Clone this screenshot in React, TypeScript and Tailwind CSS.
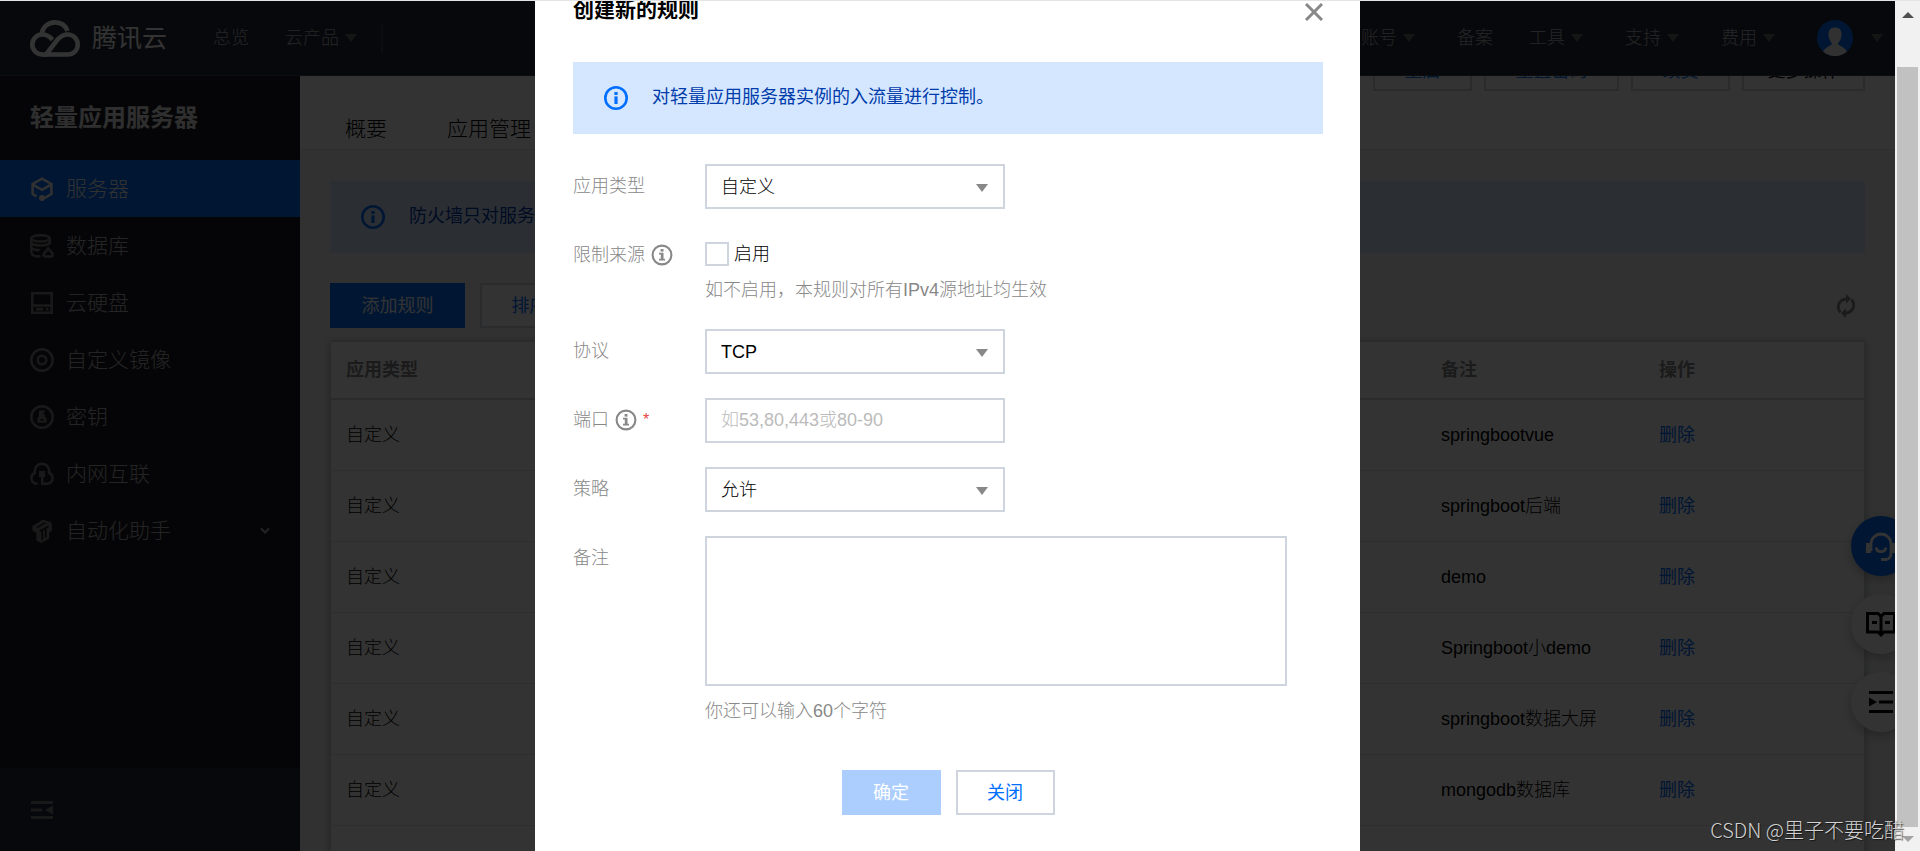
import type { ReactNode } from "react";

function Caret({ className }: { className: string }) {
  return (
    <svg viewBox="0 0 12 8" aria-hidden="true" className={`h-2 w-3 shrink-0 fill-current ${className}`}>
      <path d="M0 0h12L6 8z" />
    </svg>
  );
}

function AlertIcon() {
  return (
    <svg viewBox="0 0 24 24" aria-hidden="true" className="size-6 shrink-0 text-[#006eff]">
      <circle cx="12" cy="12" r="10.7" fill="none" stroke="currentColor" strokeWidth="2.6" />
      <rect x="10.4" y="6" width="3.2" height="3" fill="currentColor" />
      <rect x="10.4" y="10.4" width="3.2" height="7.6" fill="currentColor" />
    </svg>
  );
}

function HelpIcon() {
  return (
    <svg viewBox="0 0 22 22" aria-hidden="true" className="size-[22px] shrink-0 text-[#888]">
      <circle cx="11" cy="11" r="9.4" fill="none" stroke="currentColor" strokeWidth="2.1" />
      <rect x="9.6" y="5" width="2.9" height="2.6" fill="currentColor" />
      <path d="M8 8.8h4.5v6H14v1.8H8v-1.8h1.8v-4.2H8z" fill="currentColor" />
    </svg>
  );
}

function Alert({ children }: { children: ReactNode }) {
  return (
    <div className="flex h-[72px] items-center gap-6 bg-[#d5e7ff] pl-[31px] text-lg font-normal text-[#003cab]">
      <AlertIcon />
      <p className="pb-0.5 whitespace-nowrap">{children}</p>
    </div>
  );
}

const line = { fill: "none", stroke: "currentColor", strokeWidth: 2.5 } as const;

const menu: { label: string; icon: ReactNode; expandable?: boolean }[] = [
  {
    label: "服务器",
    icon: (
      <>
        <path {...line} d="M6.5 19.4 2.6 17V6.9L12 1.6l9.4 5.3V17l-6.6 3.8" />
        <path {...line} d="m2.8 7.6 9.2 5.2 9.2-5.2" />
        <circle cx="12" cy="21" r="3" fill="currentColor" />
      </>
    ),
  },
  {
    label: "数据库",
    icon: (
      <>
        <ellipse {...line} cx="10.5" cy="4.4" rx="9.2" ry="3.2" />
        <path {...line} d="M1.3 8.2c0 4.4 18.4 4.4 18.4 0M1.3 13.4c.5 1.6 3.6 2.7 8.2 2.6M1.3 18.6c.4 2.6 4.2 4 9 3.9M1.3 4.400v14.200M19.700 4.400v6" />
        <path {...line} d="M18.2 14.4c1.6 2.6 4.4 4.2 4.4 6 0 1.6-.8 2.2-2 2.2h-5c-1.600 0-2.200-.9-2-2.200.3-1.600 3.200-3.400 4.600-6z" />
      </>
    ),
  },
  {
    label: "云硬盘",
    icon: (
      <>
        <path {...line} d="M2.300 2.300h19.400v19.400H2.300zM2.300 14.400h19.400" />
        <path fill="currentColor" d="M6 16.800h7v2.800H6zM15.800 16.800h2.800v2.800h-2.800z" />
      </>
    ),
  },
  {
    label: "自定义镜像",
    icon: (
      <>
        <circle {...line} cx="12" cy="12" r="10.700" />
        <circle {...line} cx="12" cy="12" r="4.300" />
      </>
    ),
  },
  {
    label: "密钥",
    icon: (
      <>
        <circle {...line} cx="12" cy="12" r="10.700" />
        <path fill="currentColor" fillRule="evenodd" d="M9 5.600h5.800v2H13V9h1.800v2.400c1.300.8 1.900 1.800 1.900 3v3.400H7.300v-3.400c0-1.200.6-2.200 1.700-3zM10.500 14h3v1.800h-3z" />
      </>
    ),
  },
  {
    label: "内网互联",
    icon: (
      <>
        <path {...line} d="M7.600 21.700H7A5.600 5.600 0 0 1 4.800 11C4.200 5.600 7.400 1.700 12 1.700S19.800 5.600 19.200 11A5.600 5.600 0 0 1 17 21.700h-4.800V13" />
        <path fill="currentColor" d="M9 9h6v6H9z" />
      </>
    ),
  },
  {
    label: "自动化助手",
    expandable: true,
    icon: (
      <path fill="currentColor" fillRule="evenodd" d="m2.400 7 10.800-6.400 8.600 3.200v8l-2.600 1.400v6.400L11.400 24l-5-2.600v-7.600l-4-2.200zM6.200 8.300l8.400-5 1.600.7-8.500 5zM9.600 11.300l8.900-4.800v2l-2 1v8.600l-1.800 1v-8.600l-1.600.9v9.200l-1.800 1v-9.200l-1.700.9z" />
    ),
  },
];

const accountNav = [
  { label: "集团账号", drop: true },
  { label: "备案", drop: false },
  { label: "工具", drop: true },
  { label: "支持", drop: true },
  { label: "费用", drop: true },
];

const remarks = ["springbootvue", "springboot后端", "demo", "Springboot小demo", "springboot数据大屏", "mongodb数据库", ""];

function Header() {
  return (
    <header className="flex h-[75px] shrink-0 items-center justify-between border-b border-[#3b414c] bg-[#262b38] pr-3 text-lg text-[#b4b6ba]">
      <div className="flex items-center">
        <a href="#home" className="flex items-center gap-3 pl-[30px] text-[25px] text-white">
          <svg viewBox="0 0 50 37" aria-hidden="true" className="h-[37px] w-[50px] fill-none stroke-current stroke-[4.6]">
            <path d="M17.500 34.500H13C6.500 34.500 2.300 30 2.300 24.500c0-5.800 4.500-10 10-10 4.500 0 7.200 1.800 10.200 5.200" />
            <path d="M11.500 14.500C12.500 7 18 2.400 25 2.400c6 0 10.600 3.300 12.500 8.600" />
            <path d="M16 34.500h21.500c6 0 10.200-4.400 10.200-9.800 0-5.700-4.400-10.200-10.200-10.200-4.200 0-6.700 1.800-9.500 4.600z" />
          </svg>
          <span>腾讯云</span>
        </a>
        <nav className="flex items-center pl-[46px] font-light">
          <a href="#overview">总览</a>
          <a href="#products" className="flex items-center gap-1.5 pl-9">
            云产品
            <Caret className="text-[#6b6b6b]" />
          </a>
          <span className="ml-6 h-[30px] w-0.5 bg-[#3b414c]" />
        </nav>
      </div>
      <nav className="flex items-center gap-9 font-light">
        {accountNav.map((n) => (
          <a key={n.label} href={`#${n.label}`} className={n.drop ? "flex items-center gap-1.5 pr-1.5" : ""}>
            {n.label}
            {n.drop && <Caret className="text-[#6b6b6b]" />}
          </a>
        ))}
        <button type="button" aria-label="用户" className="flex items-center gap-[18px]">
          <svg viewBox="0 0 36 36" aria-hidden="true" className="size-9">
            <circle cx="18" cy="18" r="18" fill="#006eff" />
            <path d="M6 31.500c2-4 7-5.500 9-7.500 0-1.500-3.500-3.500-3.500-10 0-4.500 2.800-6.500 6.500-6.500s6.500 2 6.500 6.500c0 6.500-3.500 8.500-3.500 10 2 2 7 3.500 9 7.500a18 18 0 0 1-24 0z" fill="#f4f4f4" />
          </svg>
          <Caret className="text-[#6b6b6b]" />
        </button>
      </nav>
    </header>
  );
}

function Sidebar() {
  return (
    <aside className="flex w-[300px] shrink-0 flex-col bg-[#1a1d23]">
      <h1 className="flex h-[84px] items-center pl-[30px] text-2xl font-bold text-[#e8e8e8]">轻量应用服务器</h1>
      <nav className="flex-1">
        {menu.map((m, i) => (
          <a
            key={m.label}
            href={`#${m.label}`}
            className={`flex h-[57px] items-center gap-3 px-[30px] text-[21px] font-light ${i === 0 ? "bg-[#006eff] text-[#f4f4f4]" : "text-[#b4b4b4]"}`}
          >
            <svg viewBox="0 0 24 24" aria-hidden="true" className={`size-6 shrink-0 ${i === 0 ? "text-[#f4f4f4]" : "text-[#7c7c7c]"}`}>
              {m.icon}
            </svg>
            <span className="flex-1">{m.label}</span>
            {m.expandable && (
              <svg viewBox="0 0 10 8" aria-hidden="true" className="h-2 w-[10px] text-[#aaa]">
                <path {...line} d="m1 1.500 4 4 4-4" strokeWidth="2.200" />
              </svg>
            )}
          </a>
        ))}
      </nav>
      <div className="flex h-[83px] items-center bg-[#262b38] pl-[30px]">
        <button type="button" aria-label="收起菜单">
          <svg viewBox="0 0 24 24" aria-hidden="true" className="size-6 fill-[#7c7c7c]">
            <path d="M1 3h22v3H1zM1 10.500h11v3H1zM1 18h22v3H1zM23 7.500v9L15 12z" />
          </svg>
        </button>
      </div>
    </aside>
  );
}

const toolbar = [
  { label: "重启", cls: "w-[99px] text-[#006eff]" },
  { label: "重置密码", cls: "w-[135px] text-[#006eff]" },
  { label: "续费", cls: "w-[99px] text-[#006eff]" },
  { label: "更多操作", cls: "w-[123px] text-black" },
];

function Content() {
  return (
    <main className="flex min-w-0 flex-1 flex-col overflow-hidden bg-[#f4f5f7] font-light">
      <div className="border-b border-[#eaeaea] bg-white">
        <div className="flex h-[15px] items-end justify-end gap-3 overflow-hidden pr-[30px]">
          {toolbar.map((t) => (
            <button key={t.label} type="button" className={`h-[45px] shrink-0 border-2 border-[#d5d8de] pt-1 text-lg font-normal ${t.cls}`}>
              {t.label}
            </button>
          ))}
        </div>
        <div className="flex h-[58px] items-center gap-[60px] pt-[18px] pl-[45px] text-[21px] text-black">
          <a href="#summary">概要</a>
          <a href="#apps">应用管理</a>
        </div>
      </div>
      <div className="flex flex-col px-[30px] pt-[31px]">
        <Alert>防火墙只对服务器入流量进行控制。</Alert>
        <div className="flex items-center justify-between pt-[30px] pb-3 text-lg font-normal">
          <div className="flex gap-[15px]">
            <button type="button" className="h-[45px] w-[135px] bg-[#006eff] text-white">
              添加规则
            </button>
            <button type="button" className="h-[45px] w-[99px] border-2 border-[#cfd5de] bg-white text-[#006eff]">
              排序
            </button>
          </div>
          <button type="button" aria-label="刷新" className="mr-[7px]">
            <svg viewBox="0 0 24 24" aria-hidden="true" className="size-6">
              <g fill="none" stroke="#888" strokeWidth="2.800">
                <path d="M6.500 18.500C2.500 14 4 5.500 12.500 5" />
                <path d="M17.500 5.500C21.500 10 20 18.500 11.500 19" />
              </g>
              <path d="M12 0l5 4.800-5 5zM12 24l-5-4.800 5-5z" fill="#888" />
            </svg>
          </button>
        </div>
        <div className="border-x border-t-2 border-[#cfd5de] bg-white shadow-[0_2px_8px_rgba(0,0,0,0.3)]">
          <table className="w-full table-fixed border-separate border-spacing-0 text-left text-lg text-black">
            <thead>
              <tr className="h-[58px] text-[#888]">
                <th className="border-b-2 border-[#cfd5de] pl-[15px] font-bold">应用类型</th>
                <th className="w-[218px] border-b-2 border-[#cfd5de] pl-[15px] font-bold">备注</th>
                <th className="w-[220px] border-b-2 border-[#cfd5de] pl-[15px] font-bold">操作</th>
              </tr>
            </thead>
            <tbody>
              {remarks.map((r, i) => (
                <tr key={i} className="h-[71px]">
                  <td className="border-b border-[#e4e7ec] pl-[15px]">自定义</td>
                  <td className="border-b border-[#e4e7ec] pl-[15px] whitespace-nowrap">{r}</td>
                  <td className="border-b border-[#e4e7ec] pl-[15px]">
                    <a href="#delete" className="font-normal text-[#006eff]">
                      删除
                    </a>
                  </td>
                </tr>
              ))}
            </tbody>
          </table>
        </div>
      </div>
    </main>
  );
}

function FloatingTools() {
  return (
    <div className="absolute top-[515px] -right-4 flex flex-col gap-[18px]">
      <button type="button" aria-label="客服" className="grid size-[60px] place-items-center rounded-full bg-[#006eff] text-white shadow-[0_4px_12px_rgba(0,0,0,0.25)]">
        <svg viewBox="0 0 30 30" aria-hidden="true" className="size-[30px]">
          <path {...line} strokeWidth="2.800" d="M5 20V13a10 10 0 0 1 20 0v9c0 4-2 6.500-5 6.500h-5" />
          <path {...line} strokeWidth="2.800" d="M10 16.500c1 5.500 9 5.500 10 0" />
          <path fill="currentColor" d="M0 12h5v10H0zM25 12h5v10h-5z" />
        </svg>
      </button>
      <button type="button" aria-label="文档" className="grid size-[60px] place-items-center rounded-full bg-white text-black shadow-[0_4px_12px_rgba(0,0,0,0.25)]">
        <svg viewBox="0 0 30 30" aria-hidden="true" className="size-[30px]">
          <path {...line} strokeWidth="3" d="M15 7.500 12 4.500H1.500v18.500H12l3 3 3-3h10.500V4.500H18zV26" />
          <path fill="currentColor" d="M6 12h5v3H6zM19 12h5v3h-5z" />
        </svg>
      </button>
      <button type="button" aria-label="目录" className="grid size-[60px] place-items-center rounded-full bg-white text-black shadow-[0_4px_12px_rgba(0,0,0,0.25)]">
        <svg viewBox="0 0 24 24" aria-hidden="true" className="size-6 fill-current">
          <path d="M0 1h24v3H0zM10 10.500h14v3H10zM0 20h24v3H0zM0 7.500 8 12l-8 4.500z" />
        </svg>
      </button>
    </div>
  );
}

function Row({ label, htmlFor, extra, children }: { label: string; htmlFor: string; extra?: ReactNode; children: ReactNode }) {
  return (
    <div className="flex items-start">
      <div className="flex h-11 w-[132px] shrink-0 items-center gap-1.5 text-[#888]">
        <label htmlFor={htmlFor}>{label}</label>
        {extra}
      </div>
      <div className="flex min-w-0 flex-1 flex-col items-start">{children}</div>
    </div>
  );
}

function Select({ id, options }: { id: string; options: string[] }) {
  return (
    <div className="relative w-[300px]">
      <select id={id} className="block h-[45px] w-full appearance-none border-2 border-[#cfd5de] bg-white pr-9 pl-[14px] text-black outline-none">
        {options.map((o) => (
          <option key={o}>{o}</option>
        ))}
      </select>
      <Caret className="pointer-events-none absolute top-5 right-[17px] text-[#888]" />
    </div>
  );
}

function RuleDialog() {
  return (
    <div className="absolute inset-0 flex justify-center bg-black/80">
      <section role="dialog" aria-labelledby="dialog-title" className="flex w-[825px] max-w-full flex-col bg-white pr-[37px] pl-[38px] text-lg font-light">
        <div className="flex h-[61px] items-start justify-between">
          <h2 id="dialog-title" className="text-[21px] leading-[17px] font-bold text-black">
            创建新的规则
          </h2>
          <button type="button" aria-label="关闭对话框" className="pt-0.5">
            <svg viewBox="0 0 18 18" aria-hidden="true" className="size-[18px] fill-none stroke-[#888] stroke-[3]">
              <path d="m1 1 16 16M17 1 1 17" />
            </svg>
          </button>
        </div>
        <Alert>对轻量应用服务器实例的入流量进行控制。</Alert>
        <form className="flex flex-col gap-6 pt-[30px]" onSubmit={(e) => e.preventDefault()}>
          <Row label="应用类型" htmlFor="app-type">
            <Select id="app-type" options={["自定义"]} />
          </Row>
          <Row label="限制来源" htmlFor="limit-source" extra={<HelpIcon />}>
            <div className="flex h-[42px] items-center gap-[5px]">
              <input id="limit-source" type="checkbox" className="size-6 appearance-none border-2 border-[#cfd5de] bg-white" />
              <label htmlFor="limit-source" className="text-black">
                启用
              </label>
            </div>
            <p className="leading-[30px] text-[#888]">如不启用，本规则对所有IPv4源地址均生效</p>
          </Row>
          <Row label="协议" htmlFor="protocol">
            <Select id="protocol" options={["TCP"]} />
          </Row>
          <Row
            label="端口"
            htmlFor="port"
            extra={
              <>
                <HelpIcon />
                <span className="text-base text-[#e54545]">*</span>
              </>
            }
          >
            <input id="port" type="text" placeholder="如53,80,443或80-90" className="block h-[45px] w-[300px] border-2 border-[#cfd5de] bg-white px-[14px] text-black outline-none placeholder:text-[#bbb]" />
          </Row>
          <Row label="策略" htmlFor="policy">
            <Select id="policy" options={["允许"]} />
          </Row>
          <Row label="备注" htmlFor="remark">
            <textarea id="remark" className="block h-[150px] w-[582px] max-w-full resize-none border-2 border-[#cfd5de] bg-white p-3 outline-none" />
            <p className="pt-3 leading-[27px] text-[#888]">你还可以输入60个字符</p>
          </Row>
          <div className="flex justify-center gap-[15px] pt-[21px] font-normal">
            <button type="submit" disabled className="h-[45px] w-[99px] bg-[#abceff] text-white">
              确定
            </button>
            <button type="button" className="h-[45px] w-[99px] border-2 border-[#cfd5de] bg-white text-[#006eff]">
              关闭
            </button>
          </div>
        </form>
      </section>
    </div>
  );
}

function Scrollbar() {
  return (
    <div aria-hidden="true" className="flex w-[25px] shrink-0 flex-col items-center bg-[#f1f1f1]">
      <svg viewBox="0 0 12 6" className="mt-[11px] h-1.5 w-3 fill-[#505050]">
        <path d="M6 0 12 6H0z" />
      </svg>
      <div className="mt-[49px] w-[21px] flex-1 bg-[#c1c1c1]" />
      <svg viewBox="0 0 12 6" className="my-[9px] h-1.5 w-3 fill-[#a3a3a3]">
        <path d="M6 6 0 0h12z" />
      </svg>
    </div>
  );
}

export default function App() {
  return (
    <div className="relative flex h-screen overflow-hidden border-t border-[#e4e4e4] font-['Liberation_Sans','Noto_Sans_CJK_SC',sans-serif]">
      <div className="relative flex min-w-0 flex-1 flex-col overflow-hidden">
        <Header />
        <div className="flex min-h-0 flex-1">
          <Sidebar />
          <Content />
        </div>
        <FloatingTools />
        <RuleDialog />
      </div>
      <Scrollbar />
      <p className="absolute right-4 bottom-1.5 font-['Noto_Sans_CJK_SC',sans-serif] text-xl leading-[30px] font-light text-[#d2d2d2] [text-shadow:1px_1px_1px_rgba(0,0,0,0.6)]">CSDN @里子不要吃醋</p>
    </div>
  );
}
